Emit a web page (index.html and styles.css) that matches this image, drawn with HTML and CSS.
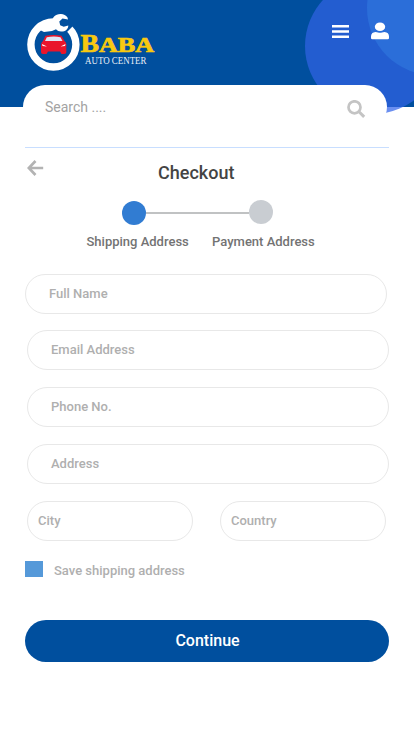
FILE: index.html
```html
<!DOCTYPE html>
<html lang="en">
<head>
<meta charset="utf-8">
<title>Checkout</title>
<link rel="stylesheet" href="styles.css">
</head>
<body>
<header class="header">
  <svg class="bubbles" width="109" height="114" viewBox="305 0 109 114" aria-hidden="true">
    <circle cx="373" cy="46" r="68" fill="#6b8ff0"/>
    <path d="M305 0H414V107H305Z" fill="#004f9e"/>
    <clipPath id="bar"><path d="M305 0H414V107H305Z"/></clipPath>
    <g clip-path="url(#bar)">
      <circle cx="373" cy="46" r="68" fill="#235dd0"/>
      <circle cx="434.500" cy="8" r="67.500" fill="#2b6ed9"/>
    </g>
  </svg>
  <svg class="logo" width="132" height="62" viewBox="25 11 132 62">
    <circle cx="53.400" cy="44.500" r="22.500" fill="none" stroke="#fff" stroke-width="7.400"/>
    <path d="M53 14H76V23L71.500 27.500L64 35L53 33Z" fill="#004f9e"/>
    <path d="M38 29Q44 22.500 52.500 22.500C51.500 17.500 55.500 13.700 61 14C63.500 14.100 66 15.300 67.500 17.500L68 19.500L62.500 18.600L59.300 21.500L60.200 25.300L63.700 26.800L68.300 25.500C68.300 29.500 65 31.800 61 31.600C59 31.500 57.500 30.800 56 29.300L52 31L44 32Z" fill="#fff"/>
    <path d="M45.500 35.800Q54 34.200 61.500 35.800L64.500 41Q67 43 66.300 46.500V52.500Q66 54 63.500 54H61.500L60 51.500H48L46.500 54H43Q41 54 41 52V45Q41 42.500 43 41Z" fill="#e9152b"/>
    <path d="M46.800 37.200Q54 36 60.500 37.200L62.500 41H45Z" fill="#dfe7f5"/>
    <path d="M42 44L47 46.500L42.500 46ZM65.500 44L60.500 46.500L65 46Z" fill="#fff"/>
    <g class="brand">
      <text x="80.500" y="52" font-size="25" textLength="18.500" lengthAdjust="spacingAndGlyphs">B</text>
      <text x="99" y="52" font-size="20" textLength="55" lengthAdjust="spacingAndGlyphs">ABA</text>
    </g>
    <text class="tagline" x="85" y="63.500" textLength="61.500" lengthAdjust="spacingAndGlyphs">AUTO CENTER</text>
  </svg>
  <nav class="actions">
    <svg width="17" height="14" viewBox="0 0 17 14" fill="#fff"><path d="M0 0H17V2.500H0ZM0 5.300H17V7.800H0ZM0 10.600H17V13.100H0Z"/></svg>
    <svg width="18" height="18" viewBox="0 0 18 18" fill="#fff"><ellipse cx="9" cy="4.700" rx="5.200" ry="4.300"/><path d="M4.500 10Q6 10 7 10.500Q9 11 11 10.500Q12 10 13.500 10Q18 10.300 18 14.500V16Q18 17.300 16.700 17.300H1.300Q0 17.300 0 16V14.500Q0 10.300 4.500 10Z"/></svg>
  </nav>
</header>
<main class="page">
  <div class="search">
    <span>Search ....</span>
    <svg width="19" height="19" viewBox="0 0 19 19" fill="none" stroke="#c4c4c4"><circle cx="7.500" cy="7.300" r="6" stroke-width="2.700"/><path d="M12 11.700L17.200 16.900" stroke-width="3"/></svg>
  </div>
  <div class="title-row">
    <svg class="back" width="17" height="16" viewBox="0 0 17 16" fill="none" stroke="#b3b3b3" stroke-width="2.700"><path d="M8.500 1L1.800 8L8.500 15M2 8H16.200"/></svg>
    <h1>Checkout</h1>
  </div>
  <div class="steps"><i class="dot active"></i><i class="line"></i><i class="dot next"></i></div>
  <div class="labels"><span>Shipping Address</span><span>Payment Address</span></div>
  <form class="form">
    <div class="field first">Full Name</div>
    <div class="field">Email Address</div>
    <div class="field">Phone No.</div>
    <div class="field">Address</div>
    <div class="pair"><div class="field short">City</div><div class="field short">Country</div></div>
    <div class="save"><i class="box"></i><span>Save shipping address</span></div>
    <button class="continue" type="button">Continue</button>
  </form>
</main>
</body>
</html>
```
FILE: styles.css
```css
* { box-sizing: border-box; }
body { margin: 0; width: 414px; height: 751px; overflow: hidden; background: #fff; font-family: Roboto, sans-serif; }
svg { display: block; flex: none; }
.header { position: relative; height: 107px; background: #004f9e; display: flex; justify-content: space-between; padding: 11px 25px 0; }
.bubbles { position: absolute; right: 0; top: 0; }
.logo { position: relative; }
.brand { fill: #f8c910; stroke: #f8c910; stroke-width: .7px; font-family: "Liberation Serif", serif; font-weight: 700; }
.tagline { fill: #e6edf6; font: 9.5px "Liberation Serif", serif; }
.actions { position: relative; display: flex; gap: 22px; padding-top: 11px; height: 31px; }
.actions svg:first-child { margin-top: 3px; }
.page { position: relative; margin-top: -22px; }
.search { width: 364px; height: 44px; margin-left: 23px; border-radius: 22px; background: #fff; display: flex; justify-content: space-between; padding: 14px 21px 0 22px; font-size: 14px; line-height: 17px; color: #a3a3a3; }
.search svg { margin-top: 1px; }
.title-row { margin: 18px 25px 0; height: 52px; border-top: 1px solid #c8deff; display: flex; padding: 12px 0 0 2px; }
h1 { margin: 2px 0 0 114px; font-size: 18px; line-height: 21px; font-weight: 500; color: #444; }
.steps { display: flex; align-items: center; height: 26px; margin-left: 122px; }
.dot { width: 24px; height: 24px; border-radius: 50%; }
.active { background: #317cd2; margin-top: 1px; }
.next { background: #c9cdd2; margin-top: -1px; }
.line { width: 103px; height: 2px; margin-top: 1px; background: #c0c2c3; }
.labels { display: flex; gap: 23.3px; margin: 9px 0 0 86.5px; font-size: 13px; line-height: 15px; font-weight: 500; color: #737373; }
.form { margin: 25px 25px 0; }
.field { width: 362px; height: 40px; margin: 0 0 17px 2px; padding-left: 23px; border: 1px solid #e8e8e8; border-radius: 20px; font-size: 13px; line-height: 38px; font-weight: 500; color: #afafaf; }
.first { margin: 0 0 16px; }
.pair { display: flex; gap: 27px; margin-left: 2px; }
.short { width: 166px; margin: 0; padding-left: 10px; }
.save { display: flex; gap: 11px; margin-top: 20px; height: 18px; font-size: 13px; line-height: 19px; font-weight: 500; color: #afafaf; }
.box { width: 18px; height: 16px; background: #5599d9; }
.continue { display: block; width: 364px; height: 42px; margin-top: 41px; padding: 0 0 0 1px; border: 0; border-radius: 21px; background: #004f9e; color: #fff; font: 500 16px/42px Roboto, sans-serif; }
```
